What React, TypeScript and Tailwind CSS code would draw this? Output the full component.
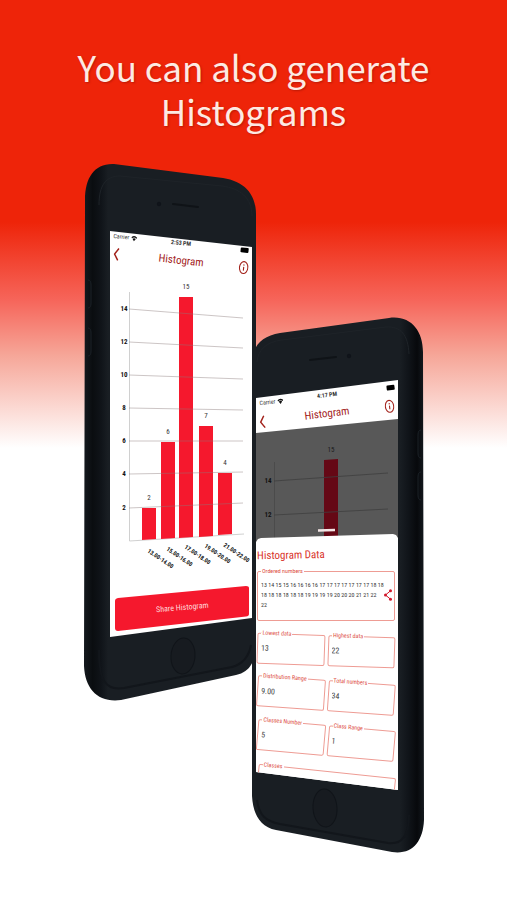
import { useId } from "react";

const uiFont = "font-['Liberation_Sans_Narrow','Roboto_Condensed','Roboto',sans-serif]";

const gridLines = [
    { value: "14", y1: 309, y2: 318 },
    { value: "12", y1: 342, y2: 348 },
    { value: "10", y1: 375, y2: 379 },
    { value: "8", y1: 408, y2: 410 },
    { value: "6", y1: 441, y2: 441 },
    { value: "4", y1: 474, y2: 472 },
    { value: "2", y1: 508, y2: 503 },
];

const bars = [
    { range: "13.00-14.00", count: 2, x: 142, top: 508, bottom: 540, labelY: 552 },
    { range: "15.00-16.00", count: 6, x: 161, top: 442, bottom: 539, labelY: 550 },
    { range: "17.00-18.00", count: 15, x: 179, top: 297, bottom: 538, labelY: 548 },
    { range: "19.00-20.00", count: 7, x: 199, top: 426, bottom: 537, labelY: 547 },
    { range: "21.00-22.00", count: 4, x: 218, top: 473, bottom: 535, labelY: 546 },
];

function StatusBar({ time, tilt }: { time: string; tilt: string }) {
    return (
        <div className={"flex h-2 items-center justify-between px-[3px] text-[6px] leading-none text-[#333] " + tilt}>
            <div className="flex w-12 items-center gap-[2px]">
                <span>Carrier</span>
                <svg viewBox="0 0 12 12" className="h-[7px] w-[6px]">
                    <path d="M0 4 Q6 -2 12 4 L10.6 6 Q6 2 1.4 6 Z M2.6 6.6 Q6 3.6 9.4 6.6 L6 11.5 Z" fill="#111" />
                </svg>
            </div>
            <span className="font-bold">{time}</span>
            <div className="flex w-12 justify-end">
                <span className="h-[5px] w-[8px] rounded-[1px] bg-black" />
            </div>
        </div>
    );
}

function NavBar({ tilt }: { tilt: string }) {
    return (
        <div className={"flex h-[14px] items-center justify-between px-[3px] text-[#a3231c] " + tilt}>
            <button aria-label="Back" className="flex w-5">
                <svg viewBox="0 0 6 14" className="h-[14px] w-[6px]" fill="none" stroke="currentColor" strokeWidth="1.5">
                    <path d="M5 1 L1.2 7 L5 13" />
                </svg>
            </button>
            <h2 className="text-[11px] leading-[14px]">Histogram</h2>
            <button aria-label="Info" className="flex w-5 justify-end">
                <svg viewBox="0 0 10 14" className="h-[14px] w-[10px]" fill="none" stroke="currentColor">
                    <ellipse cx="5" cy="7" rx="4.2" ry="6" strokeWidth="1.1" />
                    <path d="M5 6.3 V10 M5 3.8 V5" strokeWidth="1.1" />
                </svg>
            </button>
        </div>
    );
}

function Chart() {
    return (
        <svg viewBox="110 275 142 305" className="mt-[7px] block w-full">
            <path d="M129.5 292 V541 L244 534" fill="none" stroke="#c4c4c4" strokeWidth="0.8" />
            {bars.map((b) => (
                <g key={b.range}>
                    <path d={`M${b.x} ${b.top} h14 V${b.bottom - 1} l-14 1 Z`} fill="#f5182d" />
                    <text x={b.x + 7} y={b.top - 8} fontSize="7" textAnchor="middle" fill="#333">{b.count}</text>
                    <text
                        x={b.x + 5}
                        y={b.labelY}
                        fontSize="6"
                        fontWeight="bold"
                        fill="#111"
                        transform={`rotate(34 ${b.x + 5} ${b.labelY})`}
                    >
                        {b.range}
                    </text>
                </g>
            ))}
            {gridLines.map((g) => (
                <g key={g.value}>
                    <path d={`M129 ${g.y1} L243 ${g.y2}`} stroke="#8a7a7a" strokeOpacity="0.55" strokeWidth="0.8" />
                    <text x="124" y={g.y1 + 2} fontSize="7" fontWeight="bold" textAnchor="middle" fill="#111">{g.value}</text>
                </g>
            ))}
        </svg>
    );
}

function ShareButton() {
    return (
        <button className="mt-[5px] mr-[3px] ml-[5px] grid h-[46px] items-center justify-items-center text-[8px] text-[#ffd9dc]">
            <svg viewBox="0 0 134 46" className="col-start-1 row-start-1 h-full w-full">
                <path d="M3 13 L131 1 Q134 1 134 3 V29 Q134 31 131 31.500 L3 46 Q0 46 0 43 V16 Q0 13.500 3 13 Z" fill="#f5182d" />
            </svg>
            <span className="col-start-1 row-start-1 rotate-[-5deg]">Share Histogram</span>
        </button>
    );
}

// tall black body, seen from the left
function LeftBody() {
    return (
        <svg viewBox="84 163 172 538" className="col-start-1 row-start-1 w-[172px]">
            <defs>
                <linearGradient id="leftSide" x1="0" x2="1" y1="0" y2="0">
                    <stop offset="0" stopColor="#14191e" />
                    <stop offset="0.05" stopColor="#0a0d10" />
                    <stop offset="0.1" stopColor="#101419" />
                    <stop offset="0.14" stopColor="#191e23" />
                    <stop offset="1" stopColor="#191e23" />
                </linearGradient>
            </defs>
            <path
                d="M85 200 C85 177 95 163 114 164 L223 178 C243 181 256 193 256 214 V640 C256 660 251 672 236 675 L121 700 C98 703 85 689 84 666 Z"
                fill="url(#leftSide)"
            />
            <path d="M99 205 C99 185 106 176 120 176 L222 186 C240 188 252 198 252 216" fill="none" stroke="#1e2328" />
            <path d="M99 650 C99 680 105 691 124 688 L232 667 C243 664 249 656 251 645" fill="none" stroke="#12161b" strokeWidth="2" />
            <path d="M88 280 q3 0 3 5 v18 q0 5 -3 5 M88 328 q3 0 3 5 v18 q0 5 -3 5" fill="none" stroke="#1b2127" />
            <path d="M173 204 L198 207" stroke="#0f1317" strokeWidth="2" strokeLinecap="round" />
            <circle cx="159" cy="204" r="2.200" fill="#10141a" />
            <ellipse cx="183" cy="656" rx="12" ry="18" fill="#171b20" stroke="#101419" transform="rotate(4 183 656)" />
        </svg>
    );
}

function RightBody() {
    return (
        <svg viewBox="251 316 174 539" className="col-start-1 row-start-1 w-[174px]">
            <defs>
                <linearGradient id="rightSide" x1="0" x2="1" y1="0" y2="0">
                    <stop offset="0" stopColor="#191e23" />
                    <stop offset="0.86" stopColor="#191e23" />
                    <stop offset="0.91" stopColor="#101419" />
                    <stop offset="0.96" stopColor="#07090c" />
                    <stop offset="1" stopColor="#14191e" />
                </linearGradient>
            </defs>
            <path
                d="M252 362 C253 345 262 336 280 333 L389 318 C410 315 423 330 423 352 L424 820 C423 842 412 855 392 852 L276 830 C260 827 253 814 252 796 Z"
                fill="url(#rightSide)"
            />
            <path d="M257 362 C258 350 266 342 282 340 L386 327 C401 326 408 335 409 354" fill="none" stroke="#1e2328" />
            <path d="M257 800 C259 815 265 821 280 824 L388 843 C403 845 409 834 409 815" fill="none" stroke="#12161b" strokeWidth="2" />
            <path d="M421 430 q-3 0 -3 5 v18 q0 5 3 5 M421 472 q-3 0 -3 5 v18 q0 5 3 5" fill="none" stroke="#1b2127" />
            <path d="M310 360 L336 357" stroke="#0f1317" strokeWidth="2" strokeLinecap="round" />
            <circle cx="349" cy="356" r="2.200" fill="#10141a" />
            <ellipse cx="325" cy="808" rx="12" ry="19" fill="#171b20" stroke="#101419" transform="rotate(-4 325 808)" />
        </svg>
    );
}

function DimmedChart() {
    return (
        <div className="-mt-[2px] bg-[#585858] [clip-path:polygon(0_14px,100%_0,100%_100%,0_100%)]">
            <svg viewBox="256 419 142 126" className="block w-full">
                <path d="M274.500 462 V540" stroke="#484848" strokeWidth="0.8" />
                <path d="M324 460 L338 459 V540 H324 Z" fill="#650815" />
                <path d="M274 481 L388 473 M274 515 L388 509" stroke="#3f3f3f" strokeWidth="0.8" />
                <text x="268" y="483" fontSize="7" fontWeight="bold" textAnchor="middle" fill="#111">14</text>
                <text x="268" y="517" fontSize="7" fontWeight="bold" textAnchor="middle" fill="#111">12</text>
                <text x="331" y="452" fontSize="7" textAnchor="middle" fill="#1b1b1b">15</text>
                <path d="M318 530.500 L335 530" stroke="#f4e6e6" strokeWidth="2.500" />
            </svg>
        </div>
    );
}

function Field({ label, value }: { label: string; value: string }) {
    const id = useId();
    return (
        <fieldset className="h-[34px] min-w-0 rounded-[2px] border border-[#ee9c94] px-[3px]">
            <legend className="px-px text-[6px] leading-[6px] whitespace-nowrap text-[#dc4a40]">
                <label htmlFor={id}>{label}</label>
            </legend>
            <input id={id} readOnly value={value} className="mt-2 block w-full text-[8px] leading-[10px] text-[#444]" />
        </fieldset>
    );
}

function DataSheet() {
    return (
        <div className="-mt-[11px] flex flex-col gap-[11px] bg-white pt-[14px] pr-[3px] pl-px [clip-path:polygon(0_8px,2px_5px,5px_4px,137px_0,140px_1px,100%_4px,100%_100%,0_100%)]">
            <div>
                <h3 className="rotate-[-1deg] text-[11px] leading-[14px] text-[#d9332a]">Histogram Data</h3>
                <fieldset className="mt-[6px] h-[53px] min-w-0 rounded-[2px] border border-[#ee9c94] px-[3px]">
                    <legend className="px-px text-[6px] leading-[6px] text-[#dc4a40]">Ordered numbers</legend>
                    <div className="flex items-center justify-between pt-[6px]">
                        <p className="text-[6px] leading-[10px] whitespace-nowrap text-[#333]">
                            13 14 15 15 16 16 16 16 17 17 17 17 17 17 17 18 18
                            <br />
                            18 18 18 18 18 18 19 19 19 19 20 20 20 21 21 22
                            <br />
                            22
                        </p>
                        <button aria-label="Share numbers">
                            <svg viewBox="0 0 8 12" className="h-[12px] w-[8px]" fill="#d3182c">
                                <path d="M6.500 1.800 L1.500 6 L6.500 10.200" fill="none" stroke="#d3182c" />
                                <circle cx="6.500" cy="1.800" r="1.500" />
                                <circle cx="1.500" cy="6" r="1.500" />
                                <circle cx="6.500" cy="10.200" r="1.500" />
                            </svg>
                        </button>
                    </div>
                </fieldset>
            </div>
            <div className="grid rotate-[2deg] grid-cols-2 gap-[3px]">
                <Field label="Lowest data" value="13" />
                <Field label="Highest data" value="22" />
            </div>
            <div className="grid rotate-[4deg] grid-cols-2 gap-[3px]">
                <Field label="Distribution Range" value="9.00" />
                <Field label="Total numbers" value="34" />
            </div>
            <div className="grid rotate-[5deg] grid-cols-2 gap-[3px]">
                <Field label="Classes Number" value="5" />
                <Field label="Class Range" value="1" />
            </div>
            <div className="mt-px rotate-[6deg]">
                <Field label="Classes" value="" />
            </div>
        </div>
    );
}

export default function App() {
    return (
        <main className="min-h-screen overflow-hidden bg-white bg-[linear-gradient(#ee2409_222px,#f6655a_300px,#f6a698_355px,#ffffff_448px)]">
            <h1 className="pt-[45px] text-center font-['Noto_Sans_CJK_SC',sans-serif] text-[35px] leading-[44px] text-[#fdeae3] [text-shadow:1px_1px_2px_rgba(110,10,0,0.4)]">
                You can also generate
                <br />
                Histograms
            </h1>
            <div className={"mt-[30px] flex items-start justify-center " + uiFont}>
                <section className="grid w-[172px] shrink-0">
                    <LeftBody />
                    <div className="col-start-1 row-start-1 mt-[68px] ml-[26px] flex h-[406px] w-[142px] flex-col bg-white pt-2 [clip-path:polygon(0_0,100%_16px,100%_387px,0_100%)]">
                        <StatusBar time="2:53 PM" tilt="rotate-[6deg]" />
                        <div className="mt-[7px]">
                            <NavBar tilt="rotate-[6deg]" />
                        </div>
                        <Chart />
                        <ShareButton />
                    </div>
                </section>
                <section className="mt-[153px] -ml-[5px] grid w-[172px] shrink-0">
                    <RightBody />
                    <div className="col-start-1 row-start-1 mt-[64px] ml-[5px] h-[410px] w-[142px] overflow-hidden bg-white pt-[11px] [clip-path:polygon(0_18px,100%_0,100%_100%,0_392px)]">
                        <StatusBar time="4:17 PM" tilt="rotate-[-7deg]" />
                        <div className="mt-2">
                            <NavBar tilt="rotate-[-7deg]" />
                        </div>
                        <DimmedChart />
                        <DataSheet />
                    </div>
                </section>
            </div>
        </main>
    );
}
